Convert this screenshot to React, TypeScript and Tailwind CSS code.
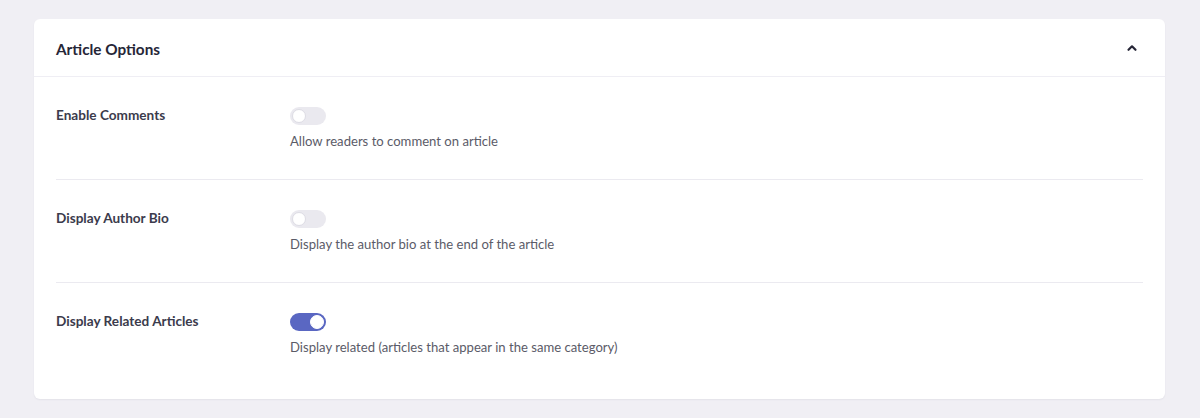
import React, { useState } from "react";

const OPTIONS = [
  { id: "comments", label: "Enable Comments", desc: "Allow readers to comment on article", on: false },
  { id: "author-bio", label: "Display Author Bio", desc: "Display the author bio at the end of the article", on: false },
  { id: "related", label: "Display Related Articles", desc: "Display related (articles that appear in the same category)", on: true },
];

function Toggle({ checked, onChange }: { checked: boolean; onChange: () => void }) {
  return (
    <button
      type="button"
      onClick={onChange}
      className={`relative flex items-center w-[36px] h-[18px] rounded-full transition-colors ${
        checked ? "bg-[#5a67c2]" : "bg-[#eae9ef]"
      }`}
    >
      <span
        className={`absolute top-[2px] w-[14px] h-[14px] rounded-full bg-white border transition-all ${
          checked ? "left-[20px] border-white" : "left-[2px] border-[#dddce4]"
        }`}
      />
    </button>
  );
}

export default function App() {
  const [values, setValues] = useState(OPTIONS.map((o) => o.on));
  const [open, setOpen] = useState(true);

  return (
    <div className="min-h-screen bg-[#f0eff4] pt-[19px] pl-[34px] pr-[35px] pb-[19px] font-['Lato',sans-serif]">
      <div className="bg-white rounded-[6px] shadow-[0_1px_2px_rgba(40,40,70,0.06)]">
        {/* Header */}
        <div className="flex items-center justify-between h-[58px] pl-[22px] pr-[27px] border-b border-[#efeef4]">
          <h2 className="text-[15.3px] leading-[22px] pt-[2px] font-bold text-[#262637]">Article Options</h2>
          <button type="button" onClick={() => setOpen(!open)} className="text-[#262637]">
            <svg width="12" height="12" viewBox="0 0 12 12" fill="none">
              <path d="M2.5 7.8 6 4.3l3.5 3.5" stroke="currentColor" strokeWidth="2.2" strokeLinecap="round" strokeLinejoin="round" />
            </svg>
          </button>
        </div>

        {open && (
          <div className="px-[22px]">
            {OPTIONS.map((opt, i) => (
              <div
                key={opt.id}
                className={`flex pt-[28px] ${
                  i < OPTIONS.length - 1 ? "pb-[28px] border-b border-[#ebeaf0]" : "pb-[42px]"
                }`}
              >
                <div className="w-[234px] shrink-0 text-[13.6px] leading-[20px] font-bold text-[#3b3b4c]">
                  {opt.label}
                </div>
                <div className="flex flex-col">
                  <div className="mt-[2px]">
                    <Toggle
                      checked={values[i]}
                      onChange={() => setValues(values.map((v, j) => (j === i ? !v : v)))}
                    />
                  </div>
                  <p className="mt-[6px] text-[13.1px] leading-[20px] text-[#5b5b68]">{opt.desc}</p>
                </div>
              </div>
            ))}
          </div>
        )}
      </div>
    </div>
  );
}
